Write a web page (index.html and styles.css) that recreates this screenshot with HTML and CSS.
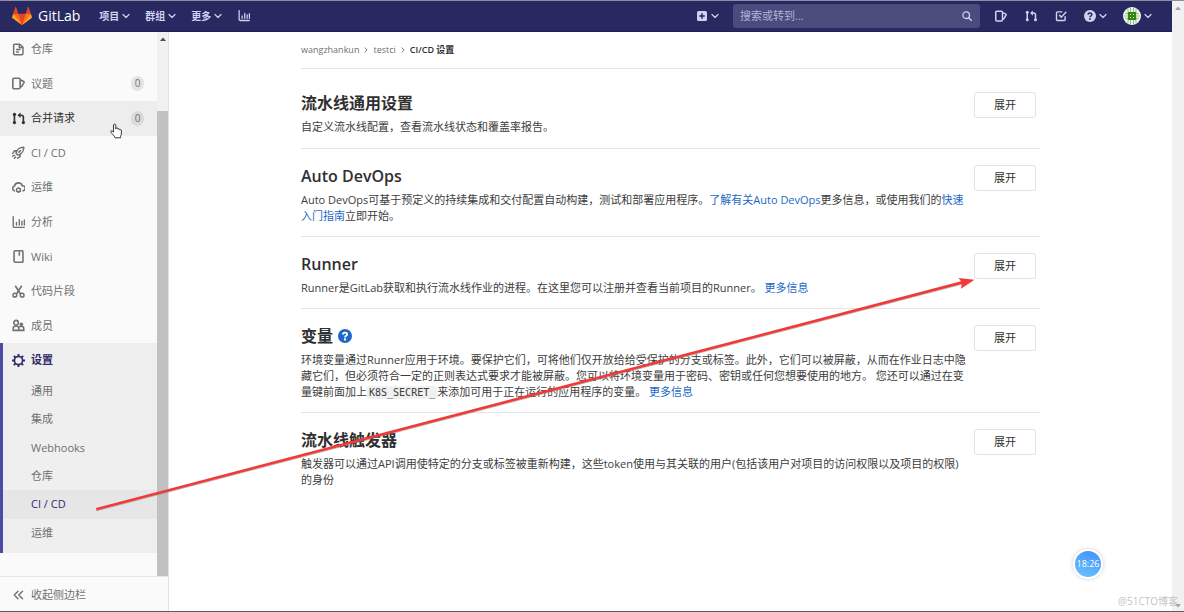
FILE: index.html
```html
<!DOCTYPE html>
<html lang="zh-CN">
<head>
<meta charset="utf-8">
<title>CI/CD 设置 · GitLab</title>
<link rel="stylesheet" href="styles.css">
</head>
<body>
<svg class="defs" aria-hidden="true">
  <symbol id="chev" viewBox="0 0 8 8"><path d="M1 2.500l3 3 3-3" fill="none" stroke="currentColor" stroke-width="1.200" stroke-linecap="round" stroke-linejoin="round"/></symbol>
  <symbol id="chart" viewBox="0 0 16 16"><path d="M1.500 1v11.500a1.500 1.500 0 0 0 1.500 1.500h12M5.500 8v3M9 4.500v6.500M12.200 6.500v4.500M15.200 5v6" fill="none" stroke="currentColor" stroke-width="1.700" stroke-linecap="round"/></symbol>
  <symbol id="issue" viewBox="0 0 16 16"><path d="M10 3.500V3a1.500 1.500 0 0 0-1.500-1.500h-6A1.500 1.500 0 0 0 1 3v10a1.500 1.500 0 0 0 1.500 1.500h6A1.500 1.500 0 0 0 10 13V3.500l4 1.700c.7.300 1 1 .7 1.700L12 11.500l-2 1.300" fill="none" stroke="currentColor" stroke-width="2" stroke-linejoin="round"/></symbol>
  <symbol id="merge" viewBox="0 0 16 16"><path d="M3 3v10M9 4h2.500A2.500 2.500 0 0 1 14 6.500V13" fill="none" stroke="currentColor" stroke-width="2"/><path d="M10.500 .5v7L6.800 4z" fill="currentColor"/><circle cx="3" cy="3" r="2" fill="currentColor"/><circle cx="3" cy="13" r="2" fill="currentColor"/><circle cx="14" cy="13" r="2" fill="currentColor"/></symbol>
</svg>

<header class="navbar">
  <a class="brand" href="#">
    <svg class="tanuki" viewBox="0 0 36 36" aria-hidden="true"><path fill="#e24329" d="M2 14l9.380 9v-9l-4-12.280c-.205-.632-1.176-.632-1.380 0zM34 14l-9.380 9v-9l4-12.280c.205-.632 1.176-.632 1.380 0zM18 34.380L3 14h30z"/><path fill="#fc6d26" d="M18 34.380L11.380 14H2l4 11zM18 34.380L24.620 14H34l-4 11z"/><path fill="#fca326" d="M2 14L.1 20.160c-.18.565 0 1.200.5 1.560L18 34.380zM34 14l1.900 6.160c.18.565 0 1.200-.5 1.560L18 34.380z"/></svg>
    <span>GitLab</span>
  </a>
  <nav class="menus" aria-label="主导航">
    <button class="menu" type="button">项目<svg class="chev"><use href="#chev"/></svg></button>
    <button class="menu" type="button">群组<svg class="chev"><use href="#chev"/></svg></button>
    <button class="menu" type="button">更多<svg class="chev"><use href="#chev"/></svg></button>
    <a class="tool" href="#" aria-label="统计"><svg class="icon"><use href="#chart"/></svg></a>
  </nav>
  <div class="actions">
    <button class="menu" type="button" aria-label="新建"><svg class="plus" viewBox="0 0 10 10"><rect width="10" height="10" rx="1.500" fill="currentColor"/><path d="M5 2.200v5.600M2.200 5h5.600" stroke="#292961" stroke-width="1.500"/></svg><svg class="chev"><use href="#chev"/></svg></button>
    <label class="search">
      <input type="text" placeholder="搜索或转到..." aria-label="搜索或转到">
      <svg class="lens" viewBox="0 0 10 10" aria-hidden="true"><circle cx="4.200" cy="4.200" r="3.300" fill="none" stroke="currentColor" stroke-width="1.300"/><path d="M6.700 6.700L9.200 9.200" stroke="currentColor" stroke-width="1.500" stroke-linecap="round"/></svg>
    </label>
    <div class="tools">
      <a class="tool" href="#" aria-label="议题"><svg class="icon"><use href="#issue"/></svg></a>
      <a class="tool" href="#" aria-label="合并请求"><svg class="icon"><use href="#merge"/></svg></a>
      <a class="tool" href="#" aria-label="待办"><svg class="icon" viewBox="0 0 16 16"><path d="M9 2.500H3.500A1.500 1.500 0 0 0 2 4v8.500A1.500 1.500 0 0 0 3.500 14H12a1.500 1.500 0 0 0 1.500-1.500V9M6 7l2.500 2.500L14.500 3" fill="none" stroke="currentColor" stroke-width="1.900" stroke-linecap="round" stroke-linejoin="round"/></svg></a>
      <button class="menu" type="button" aria-label="帮助"><svg class="icon" viewBox="0 0 16 16"><circle cx="8" cy="8" r="8" fill="currentColor"/><path d="M5.500 6.300C5.500 4.700 6.600 4 8 4s2.500.8 2.500 2.100C10.500 7.800 8 7.800 8 9.600" fill="none" stroke="#292961" stroke-width="1.900"/><circle cx="8" cy="12" r="1.200" fill="#292961"/></svg><svg class="chev"><use href="#chev"/></svg></button>
      <button class="menu" type="button" aria-label="用户"><svg class="avatar" viewBox="0 0 18 18"><circle cx="9" cy="9" r="9" fill="#f4f8f2"/><path d="M5 1.500v15M7.500 1v16M10.500 1v16M13 1.500v15M2 6.500h14M1 9h3M14 9h3M2 11.500h14" stroke="#8cc27a" stroke-width="1"/><path d="M5 5h8v8H5z" fill="#2f8a14"/><path d="M7 7h1v1H7zM10 7h1v1h-1zM7 10h1v1H7zM10 10h1v1h-1z" fill="#cfe6c6"/></svg><svg class="chev"><use href="#chev"/></svg></button>
    </div>
  </div>
</header>

<div class="body">
  <aside class="sidebar">
    <div class="scroller">
      <nav class="side-nav" aria-label="项目导航">
        <ul class="items">
          <li><a class="item" href="#"><svg class="icon" viewBox="0 0 16 16"><path d="M3.500 1.500h6L13.500 5v8a1.500 1.500 0 0 1-1.500 1.500H3.500A1.500 1.500 0 0 1 2 13V3a1.500 1.500 0 0 1 1.500-1.500zM5 8h5.500M5 11h3.500M9 2v3.500h4" fill="none" stroke="currentColor" stroke-width="1.800"/></svg>仓库</a></li>
          <li><a class="item" href="#"><svg class="icon"><use href="#issue"/></svg>议题<span class="count">0</span></a></li>
          <li><a class="item hover" href="#"><svg class="icon"><use href="#merge"/></svg>合并请求<span class="count">0</span></a></li>
          <li><a class="item" href="#"><svg class="icon" viewBox="0 0 16 16"><path d="M5 9c.5-4 4-7.500 9.500-7.500C14.500 7 11 10.500 7 11zM5 9l2 2M5.500 6H3L1 9M10 10.500V13l-3 2M8.500 7.500l2-2M1 12.500l2-1M3 15l1.500-1.500" fill="none" stroke="currentColor" stroke-width="1.900" stroke-linecap="round" stroke-linejoin="round"/></svg>CI / CD</a></li>
          <li><a class="item" href="#"><svg class="icon" viewBox="0 0 16 16"><path d="M3 12A3 3 0 0 1 3 6.200 5 5 0 0 1 12.700 6 3 3 0 0 1 13.500 12" fill="none" stroke="currentColor" stroke-width="1.900" stroke-linecap="round"/><circle cx="8" cy="11" r="2.300" fill="none" stroke="currentColor" stroke-width="1.700"/><path d="M8 7.500V9M8 13v1.700M4.800 9.200l1.400.8M9.800 12l1.400.8M4.800 12.800l1.400-.8M9.800 10l1.400-.8" stroke="currentColor" stroke-width="1.400"/></svg>运维</a></li>
          <li><a class="item" href="#"><svg class="icon"><use href="#chart"/></svg>分析</a></li>
          <li><a class="item" href="#"><svg class="icon" viewBox="0 0 16 16"><path d="M4 1h8.500a1 1 0 0 1 1 1v12a1 1 0 0 1-1 1H4a1.500 1.500 0 0 1-1.500-1.500v-11A1.500 1.500 0 0 1 4 1zM9 2v5" fill="none" stroke="currentColor" stroke-width="1.900"/></svg>Wiki</a></li>
          <li><a class="item" href="#"><svg class="icon" viewBox="0 0 16 16"><path d="M4 1l6.500 10M12 1L5.500 11" fill="none" stroke="currentColor" stroke-width="2"/><circle cx="3.500" cy="12.500" r="2.300" fill="none" stroke="currentColor" stroke-width="1.800"/><circle cx="12.500" cy="12.500" r="2.300" fill="none" stroke="currentColor" stroke-width="1.800"/></svg>代码片段</a></li>
          <li><a class="item" href="#"><svg class="icon" viewBox="0 0 16 16"><path d="M1.500 14v-2.500C1.500 9.500 3 8.500 5 8.500s3.500 1 3.500 3V14zM8.500 14h6v-2c0-2-1.200-3-3-3-1 0-2 .3-2.500 1" fill="none" stroke="currentColor" stroke-width="1.900"/><circle cx="5" cy="4.500" r="2.800" fill="none" stroke="currentColor" stroke-width="1.900"/><circle cx="11.500" cy="6.500" r="2.200" fill="currentColor"/></svg>成员</a></li>
        </ul>
        <div class="settings">
          <a class="item current" href="#"><svg class="icon" viewBox="0 0 16 16"><circle cx="8" cy="8" r="5" fill="none" stroke="currentColor" stroke-width="2"/><path d="M8 0v3M8 13v3M0 8h3M13 8h3M2.300 2.300l2.200 2.200M11.500 11.500l2.200 2.200M2.300 13.700l2.200-2.200M11.500 4.500l2.200-2.200" stroke="currentColor" stroke-width="2.400"/></svg>设置</a>
          <ul class="subitems">
            <li><a class="subitem" href="#">通用</a></li>
            <li><a class="subitem" href="#">集成</a></li>
            <li><a class="subitem" href="#">Webhooks</a></li>
            <li><a class="subitem" href="#">仓库</a></li>
            <li><a class="subitem selected" href="#">CI / CD</a></li>
            <li><a class="subitem" href="#">运维</a></li>
          </ul>
        </div>
      </nav>
      <div class="track" aria-hidden="true"><svg class="arrow" viewBox="0 0 6 4"><path d="M0 4l3-3.500L6 4z" fill="#505050"/></svg><div class="thumb"></div></div>
    </div>
    <button class="collapse" type="button"><svg class="icon" viewBox="0 0 16 16"><path d="M8 3L3 8l5 5M14 3L9 8l5 5" fill="none" stroke="currentColor" stroke-width="1.900" stroke-linecap="round" stroke-linejoin="round"/></svg>收起侧边栏</button>
  </aside>

  <main class="main">
    <div class="content">
      <nav class="crumbs" aria-label="面包屑">
        <a href="#">wangzhankun</a><svg class="sep"><use href="#chev"/></svg><a href="#">testci</a><svg class="sep"><use href="#chev"/></svg><strong>CI/CD 设置</strong>
      </nav>
      <section class="block first">
        <div class="copy"><h2>流水线通用设置</h2><p>自定义流水线配置，查看流水线状态和覆盖率报告。</p></div>
        <button class="expand" type="button">展开</button>
      </section>
      <section class="block">
        <div class="copy"><h2>Auto DevOps</h2><p>Auto DevOps可基于预定义的持续集成和交付配置自动构建，测试和部署应用程序。<a href="#">了解有关Auto DevOps</a>更多信息，或使用我们的<a href="#">快速<br>入门指南</a>立即开始。</p></div>
        <button class="expand" type="button">展开</button>
      </section>
      <section class="block">
        <div class="copy"><h2>Runner</h2><p>Runner是GitLab获取和执行流水线作业的进程。在这里您可以注册并查看当前项目的Runner。 <a href="#">更多信息</a></p></div>
        <button class="expand" type="button">展开</button>
      </section>
      <section class="block">
        <div class="copy"><h2>变量<a class="hint" href="#" aria-label="帮助"><svg viewBox="0 0 16 16"><circle cx="8" cy="8" r="8" fill="currentColor"/><path d="M5.500 6.300C5.500 4.700 6.600 4 8 4s2.500.8 2.500 2.100C10.500 7.800 8 7.800 8 9.600" fill="none" stroke="#fff" stroke-width="2"/><circle cx="8" cy="12" r="1.300" fill="#fff"/></svg></a></h2><p>环境变量通过Runner应用于环境。要保护它们，可将他们仅开放给给受保护的分支或标签。此外，它们可以被屏蔽，从而在作业日志中隐<br>藏它们，但必须符合一定的正则表达式要求才能被屏蔽。您可以将环境变量用于密码、密钥或任何您想要使用的地方。 您还可以通过在变<br>量键前面加上<code>K8S_SECRET_</code>来添加可用于正在运行的应用程序的变量。 <a href="#">更多信息</a></p></div>
        <button class="expand" type="button">展开</button>
      </section>
      <section class="block">
        <div class="copy"><h2>流水线触发器</h2><p>触发器可以通过API调用使特定的分支或标签被重新构建，这些token使用与其关联的用户(包括该用户对项目的访问权限以及项目的权限)<br>的身份</p></div>
        <button class="expand" type="button">展开</button>
      </section>
    </div>
  </main>
</div>

<div class="page-track" aria-hidden="true"><svg class="arrow" viewBox="0 0 6 4"><path d="M0 4l3-3.500L6 4z" fill="#a3a3a3"/></svg><svg class="arrow" viewBox="0 0 6 4"><path d="M0 0l3 3.500L6 0z" fill="#a3a3a3"/></svg></div>

<svg class="annotation" viewBox="0 0 1184 612" aria-hidden="true"><path d="M96.500 510.800L962 284.200" stroke="#777" stroke-opacity=".5" stroke-width="1" fill="none"/><path d="M96 508l866-227 .7 2.800L96.500 510.500z" fill="#f03a3a"/><path d="M974.500 279.800l-16-1.800 3.500 4.600-1 6.200z" fill="#f03a3a"/></svg>
<svg class="pointer" viewBox="0 0 12 16" aria-hidden="true"><path d="M3.500 9V2a1.200 1.200 0 0 1 2.300 0v4l.2-.6a1 1 0 0 1 1.900.3v.5a1 1 0 0 1 1.800.4v.5a.9.900 0 0 1 1.700.4V10c0 2-.9 2.500-.9 4.800H5C4.500 12.500 2 11 .8 8.900c-.4-.9.600-1.500 1.300-.9z" fill="#fff" stroke="#222" stroke-width=".9" stroke-linejoin="round"/></svg>
<div class="clock">18:26</div>
<div class="watermark">@51CTO博客</div>
</body>
</html>
```

FILE: styles.css
```css
* {
  box-sizing: border-box;
}

body {
  margin: 0;
  min-height: 100vh;
  padding-right: 12px;
  display: flex;
  flex-direction: column;
  position: relative;
  background: #fff;
  border-top: 1px solid #8c8fa3;
  border-bottom: 1px solid #5c5c5c;
  color: #303030;
  font-family: "Open Sans", "Noto Sans CJK SC", sans-serif;
  font-size: 11px;
  line-height: 16px;
}

a {
  color: #1b69c6;
  text-decoration: none;
}

button,
input {
  font: inherit;
  color: inherit;
}

button {
  padding: 0;
  border: 0;
  background: none;
}

ul {
  margin: 0;
  padding: 0;
  list-style: none;
}

svg {
  display: block;
  flex: none;
}

.defs {
  display: none;
}

.icon {
  width: 12px;
  height: 12px;
}

.chev {
  width: 8px;
  height: 8px;
}

/* Top bar */
.navbar {
  display: flex;
  align-items: center;
  height: 31px;
  padding: 0 20px 0 12px;
  border-bottom: 1px solid #1f1f55;
  background: #292961;
  color: #d1d1f0;
}

.brand {
  display: flex;
  align-items: center;
  gap: 6px;
  color: #fff;
  font-size: 14px;
}

.tanuki {
  width: 20px;
  height: 20px;
}

.menus {
  display: flex;
  align-items: center;
  gap: 15px;
  margin-left: 19px;
}

.menu {
  display: flex;
  align-items: center;
  gap: 3px;
  font-size: 10px;
  font-weight: 600;
}

.tool {
  display: flex;
  justify-content: center;
  width: 14px;
  color: inherit;
}

.actions {
  display: flex;
  flex: 1;
  justify-content: flex-end;
  align-items: center;
  gap: 14px;
}

.plus {
  width: 10px;
  height: 10px;
  margin-right: 1px;
}

.search {
  display: flex;
  align-items: center;
  width: 247px;
  height: 24px;
  padding: 0 8px 0 7px;
  border-radius: 3px;
  background: #4b4b7d;
}

.search input {
  flex: 1;
  min-width: 0;
  padding: 0;
  border: 0;
  outline: 0;
  background: none;
}

.search input::placeholder {
  color: #b4b4d6;
  opacity: 1;
}

.lens {
  width: 10px;
  height: 10px;
}

.tools {
  display: flex;
  align-items: center;
  gap: 16px;
}

.avatar {
  width: 18px;
  height: 18px;
}

/* Page body */
.body {
  display: flex;
  flex: 1;
}

.sidebar {
  display: flex;
  flex-direction: column;
  flex: none;
  width: 169px;
  border-right: 1px solid #e5e5e5;
  background: #fafafa;
}

.scroller {
  display: flex;
  flex: 1;
}

.side-nav {
  flex: 1;
}

.items {
  display: grid;
  grid-auto-rows: 1fr;
  height: 311px;
}

.item {
  display: flex;
  align-items: center;
  gap: 6px;
  height: 100%;
  padding: 0 13px 0 12px;
  color: #707070;
}

.item .icon {
  width: 13px;
  height: 13px;
}

.item.hover {
  background: #ededed;
  color: #303030;
}

.count {
  min-width: 13px;
  margin-left: auto;
  border-radius: 7px;
  background: #e4e4e4;
  color: #707070;
  font-size: 10px;
  line-height: 15px;
  text-align: center;
}

.hover .count {
  background: #dadada;
}

.settings {
  padding-bottom: 6px;
  border-left: 3px solid #4b4ba3;
  background: #efefef;
}

.item.current {
  height: 34px;
  padding-left: 9px;
  color: #2f2a6b;
  font-weight: 600;
}

.subitems {
  display: grid;
  grid-auto-rows: 1fr;
  height: 170px;
}

.subitem {
  display: flex;
  align-items: center;
  height: 100%;
  padding-left: 28px;
  color: #707070;
}

.subitem.selected {
  background: #e6e6e6;
  color: #2f2a6b;
}

.track {
  display: flex;
  flex-direction: column;
  align-items: center;
  gap: 70px;
  width: 11px;
  padding-top: 5px;
  background: #f1f1f1;
}

.arrow {
  width: 6px;
  height: 4px;
}

.thumb {
  flex: 1;
  width: 11px;
  background: #c1c1c1;
}

.collapse {
  display: flex;
  align-items: center;
  gap: 7px;
  height: 35px;
  padding: 2px 12px 0;
  border-top: 1px solid #e5e5e5;
  color: #707070;
}

.main {
  flex: 1;
  min-width: 0;
  padding: 0 12px;
}

.content {
  max-width: 739px;
  margin: 0 auto;
}

.crumbs {
  display: flex;
  align-items: center;
  gap: 4px;
  height: 37px;
  border-bottom: 1px solid #e5e5e5;
  font-size: 9px;
}

.crumbs a {
  color: #707070;
}

.crumbs strong {
  font-weight: 600;
}

.sep {
  width: 6px;
  height: 6px;
  color: #707070;
  transform: rotate(-90deg);
}

.block {
  display: flex;
  justify-content: space-between;
  align-items: flex-start;
  padding: 16px 4px 12px 0;
  border-bottom: 1px solid #e5e5e5;
}

.block.first {
  padding-top: 23px;
  padding-bottom: 13px;
}

.block:last-child {
  border-bottom: 0;
}

.copy {
  flex: 1;
  min-width: 0;
}

h2 {
  display: flex;
  align-items: center;
  gap: 5px;
  margin: 0 0 5px;
  font-size: 16px;
  font-weight: 600;
  line-height: 22px;
}

p {
  margin: 0;
  color: #3c3c3c;
}

.hint svg {
  width: 14px;
  height: 14px;
}

code {
  padding: 1px 2px;
  border-radius: 3px;
  background: #f0f0f0;
  font-family: "DejaVu Sans Mono", monospace;
  font-size: 10px;
  line-height: 12px;
}

.expand {
  flex: none;
  width: 62px;
  height: 26px;
  border: 1px solid #e3e3e3;
  border-radius: 3px;
  background: #fff;
}

/* Layers over the page */
.page-track {
  position: absolute;
  top: 0;
  right: 0;
  bottom: 0;
  display: flex;
  flex-direction: column;
  align-items: center;
  justify-content: space-between;
  width: 12px;
  padding: 5px 0 3px;
  background: #f1f1f1;
}

.annotation {
  position: absolute;
  top: -1px;
  left: 0;
  width: 1184px;
  height: 612px;
  pointer-events: none;
}

.pointer {
  position: absolute;
  top: 122px;
  left: 110px;
  width: 12px;
  height: 16px;
}

.clock {
  position: absolute;
  right: 81px;
  bottom: 32px;
  width: 30px;
  height: 30px;
  border: 2px solid #fff;
  border-radius: 50%;
  background: linear-gradient(20deg, #6cc4ff, #4090f7);
  box-shadow: 0 0 4px #ccc;
  color: #fff;
  font-size: 9px;
  line-height: 26px;
  text-align: center;
}

.watermark {
  position: absolute;
  right: 6px;
  bottom: 2px;
  color: #c4c4c4;
  font-size: 10px;
}
```
